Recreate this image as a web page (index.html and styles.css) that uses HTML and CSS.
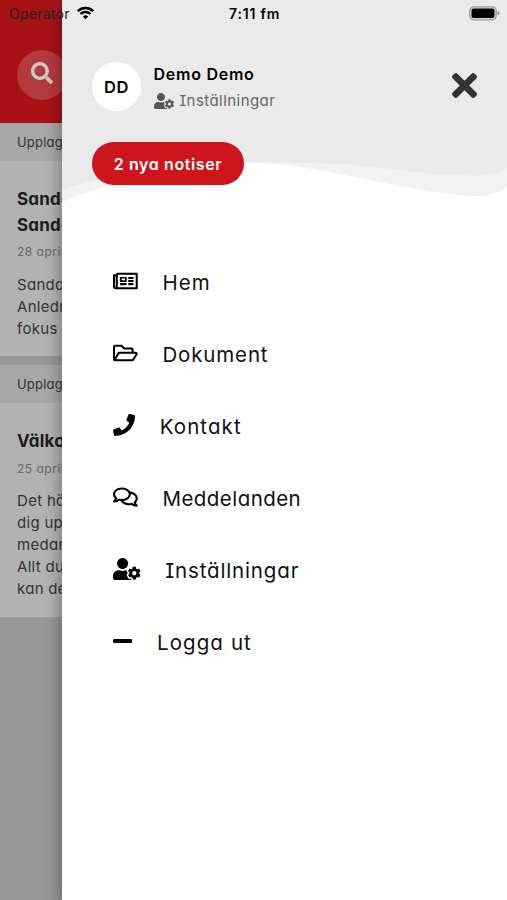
FILE: index.html
```html
<!DOCTYPE html>
<html lang="sv">
<head>
<meta charset="utf-8">
<title>Meny</title>
<link rel="stylesheet" href="styles.css">
</head>
<body>
<svg class="defs" width="0" height="0">
  <symbol id="user-cog" viewBox="0 0 640 512"><path d="M610.5 373.3c2.600-14.100 2.600-28.500 0-42.600l25.800-14.900c3-1.700 4.300-5.200 3.300-8.500-6.700-21.600-18.200-41.200-33.200-57.400-2.300-2.500-6-3.100-9-1.400l-25.800 14.900c-10.900-9.300-23.400-16.500-36.900-21.300v-29.800c0-3.400-2.400-6.400-5.700-7.100-22.300-5-45-4.800-66.200 0-3.300.7-5.700 3.700-5.700 7.100v29.800c-13.500 4.800-26 12-36.900 21.300l-25.800-14.900c-2.900-1.700-6.700-1.100-9 1.400-15 16.200-26.500 35.800-33.200 57.400-1 3.300.4 6.800 3.300 8.500l25.800 14.900c-2.600 14.100-2.600 28.500 0 42.600l-25.800 14.900c-3 1.700-4.300 5.200-3.300 8.500 6.700 21.600 18.200 41.100 33.200 57.400 2.300 2.500 6 3.100 9 1.400l25.800-14.900c10.900 9.300 23.400 16.500 36.900 21.300v29.800c0 3.400 2.400 6.400 5.700 7.100 22.300 5 45 4.800 66.200 0 3.300-.7 5.700-3.700 5.700-7.100v-29.800c13.500-4.800 26-12 36.900-21.300l25.800 14.900c2.900 1.700 6.700 1.100 9-1.400 15-16.200 26.500-35.800 33.200-57.400 1-3.300-.4-6.800-3.300-8.500l-25.800-14.900zM496 400.500c-26.800 0-48.500-21.800-48.500-48.500s21.800-48.500 48.500-48.500 48.500 21.800 48.500 48.500-21.700 48.500-48.500 48.500zM224 256c70.700 0 128-57.300 128-128S294.700 0 224 0 96 57.300 96 128s57.300 128 128 128zm201.200 226.500c-2.300-1.200-4.600-2.600-6.800-3.900l-7.900 4.600c-6 3.400-12.800 5.300-19.600 5.300-10.900 0-21.400-4.600-28.900-12.600-18.300-19.800-32.300-43.900-40.200-69.600-5.500-17.700 1.900-36.400 17.900-45.700l7.900-4.600c-.1-2.600-.1-5.200 0-7.800l-7.900-4.600c-16-9.200-23.400-28-17.900-45.700.9-2.900 2.200-5.800 3.200-8.700-3.800-.3-7.500-1.200-11.400-1.200h-16.700c-22.200 10.200-46.900 16-72.900 16s-50.600-5.800-72.900-16h-16.700C60.200 288 0 348.200 0 422.400V464c0 26.500 21.500 48 48 48h352c10.100 0 19.500-3.200 27.200-8.500-1.200-3.800-2-7.700-2-11.800v-9.200z"/></symbol>
</svg>
<div class="screen">
  <main class="feed">
    <header class="topbar">
      <span class="search"><svg viewBox="0 0 512 512"><path d="M505 442.700L405.300 343c-4.500-4.500-10.600-7-17-7H372c27.600-35.300 44-79.700 44-128C416 93.100 322.900 0 208 0S0 93.100 0 208s93.100 208 208 208c48.300 0 92.700-16.400 128-44v16.300c0 6.400 2.500 12.500 7 17l99.700 99.700c9.400 9.400 24.600 9.400 33.900 0l28.300-28.300c9.400-9.400 9.400-24.600.1-34zM208 336c-70.700 0-128-57.200-128-128 0-70.700 57.200-128 128-128 70.700 0 128 57.200 128 128 0 70.700-57.200 128-128 128z"/></svg></span>
    </header>
    <article class="post">
      <div class="strip">Upplag</div>
      <div class="content first">
        <h2>Sanda<br>Sanda</h2>
        <time>28 april</time>
        <p>Sanda<br>Anledn<br>fokus</p>
      </div>
    </article>
    <article class="post">
      <div class="strip">Upplag</div>
      <div class="content">
        <h2>Välko</h2>
        <time>25 april</time>
        <p>Det hä<br>dig up<br>medar<br>Allt du<br>kan de</p>
      </div>
    </article>
  </main>
  <aside class="drawer">
    <svg class="wave" viewBox="0 0 445 210">
      <path class="wave-light" d="M0 0H445V187C429 199 410 197 382 193C305 183 248 163 187 163C115 163 50 183 0 202Z"/>
      <path class="wave-dark" d="M0 0H445V168C430 177 420 176 390 175C340 173 312 163 240 163C130 158 55 171 0 190Z"/>
    </svg>
    <div class="profile">
      <span class="avatar">DD</span>
      <div class="who">
        <strong>Demo Demo</strong>
        <span class="settings"><svg><use href="#user-cog"/></svg><span>Inställningar</span></span>
      </div>
      <svg class="close" viewBox="0 80 352 352"><path d="M242.720 256l100.070-100.070c12.280-12.280 12.280-32.190 0-44.480l-22.240-22.240c-12.280-12.280-32.190-12.280-44.480 0L176 189.280 75.930 89.210c-12.280-12.280-32.190-12.280-44.480 0L9.210 111.450c-12.280 12.280-12.280 32.190 0 44.480L109.280 256 9.210 356.070c-12.280 12.280-12.280 32.190 0 44.480l22.240 22.240c12.280 12.280 32.200 12.280 44.480 0L176 322.720l100.070 100.070c12.280 12.280 32.200 12.280 44.480 0l22.240-22.240c12.280-12.280 12.280-32.190 0-44.480L242.720 256z"/></svg>
    </div>
    <button class="notices">2 nya notiser</button>
    <nav class="menu">
      <a><svg class="w576" viewBox="0 0 576 512"><path d="M552 64H112c-20.858 0-38.643 13.377-45.248 32H24c-13.255 0-24 10.745-24 24v272c0 30.928 25.072 56 56 56h496c13.255 0 24-10.745 24-24V88c0-13.255-10.745-24-24-24zM48 392V144h16v248c0 4.411-3.589 8-8 8s-8-3.589-8-8zm480 8H111.422c.374-2.614.578-5.283.578-8V112h416v288zM172 280h136c6.627 0 12-5.373 12-12v-96c0-6.627-5.373-12-12-12H172c-6.627 0-12 5.373-12 12v96c0 6.627 5.373 12 12 12zm28-80h80v40h-80v-40zm-40 140v-24c0-6.627 5.373-12 12-12h136c6.627 0 12 5.373 12 12v24c0 6.627-5.373 12-12 12H172c-6.627 0-12-5.373-12-12zm192 0v-24c0-6.627 5.373-12 12-12h104c6.627 0 12 5.373 12 12v24c0 6.627-5.373 12-12 12H364c-6.627 0-12-5.373-12-12zm0-144v-24c0-6.627 5.373-12 12-12h104c6.627 0 12 5.373 12 12v24c0 6.627-5.373 12-12 12H364c-6.627 0-12-5.373-12-12zm0 72v-24c0-6.627 5.373-12 12-12h104c6.627 0 12 5.373 12 12v24c0 6.627-5.373 12-12 12H364c-6.627 0-12-5.373-12-12z"/></svg><span class="wide">Hem</span></a>
      <a><svg class="w576" viewBox="0 0 576 512"><path d="M527.900 224H480v-48c0-26.500-21.500-48-48-48H272l-64-64H48C21.500 64 0 85.500 0 112v288c0 26.500 21.500 48 48 48h400c16.500 0 31.900-8.500 40.700-22.600l79.900-128c20-31.900-3-73.400-40.700-73.400zM48 118c0-3.300 2.700-6 6-6h134.100l64 64H426c3.300 0 6 2.700 6 6v42H152c-16.800 0-32.400 8.800-41.100 23.200L48 351.400zm400 282H72l77.200-128H528z"/></svg><span>Dokument</span></a>
      <a><svg class="w512" viewBox="0 0 512 512"><path d="M493.400 24.600l-104-24c-11.300-2.600-22.900 3.300-27.500 13.900l-48 112c-4.200 9.800-1.400 21.300 6.900 28l60.600 49.600c-36 76.700-98.900 140.500-177.200 177.200l-49.600-60.600c-6.800-8.300-18.200-11.100-28-6.900l-112 48C3.900 366.500-2 378.100.6 389.400l24 104C27.100 504.200 36.700 512 48 512c256.100 0 464-207.500 464-464 0-11.200-7.700-20.900-18.600-23.400z"/></svg><span class="wide">Kontakt</span></a>
      <a><svg class="w576" viewBox="0 0 576 512"><path d="M532 386.200c27.500-27.100 44-61.100 44-98.200 0-80-76.500-146.100-176.200-157.900C368.300 72.500 294.300 32 208 32 93.100 32 0 103.600 0 192c0 37 16.500 71 44 98.200-15.300 30.700-37.300 54.500-37.700 54.900-6.300 6.700-8.100 16.500-4.400 25 3.600 8.500 12 14 21.200 14 53.500 0 96.700-20.200 125.200-38.800 9.200 2.100 18.700 3.700 28.400 4.900C208.100 407.600 281.800 448 368 448c20.800 0 40.800-2.400 59.800-6.800C456.300 459.700 499.400 480 553 480c9.200 0 17.500-5.500 21.200-14 3.600-8.500 1.900-18.300-4.400-25-.4-.3-22.500-24.100-37.800-54.800zm-392.800-92.300L122.100 305c-14.100 9.100-28.500 16.300-43.100 21.400 2.700-4.700 5.400-9.700 8-14.800l15.500-31.100L77.700 256C64.200 242.600 48 220.700 48 192c0-60.700 73.300-112 160-112s160 51.300 160 112-73.300 112-160 112c-16.500 0-33-1.900-49-5.600l-19.800-4.500zM498.300 352l-24.700 24.400 15.500 31.100c2.600 5.100 5.300 10.100 8 14.800-14.600-5.100-29-12.300-43.100-21.400l-17.100-11.100-19.900 4.600c-16 3.700-32.500 5.600-49 5.600-54 0-102.200-20.100-131.300-49.700C338 339.500 416 272.900 416 192c0-3.400-.4-6.700-.7-10C479.700 196.500 528 238.800 528 288c0 28.700-16.200 50.600-29.700 64z"/></svg><span class="tight">Meddelanden</span></a>
      <a><svg class="w640"><use href="#user-cog"/></svg><span>Inställningar</span></a>
      <a><svg class="w448" viewBox="0 0 448 512"><path d="M416 208H32c-17.670 0-32 14.330-32 32v32c0 17.670 14.330 32 32 32h384c17.670 0 32-14.330 32-32v-32c0-17.670-14.330-32-32-32z"/></svg><span class="wide">Logga ut</span></a>
    </nav>
  </aside>
  <div class="status">
    <span class="carrier">Operatör</span>
    <svg class="wifi" viewBox="0 0 18 14"><path d="M1.300 5.200a11 11 0 0 1 15.400 0M4 8a7.200 7.200 0 0 1 10 0"/><path class="dot" d="M9 13.200L6.300 10.500a3.900 3.900 0 0 1 5.400 0Z"/></svg>
    <span class="clock">7:11 fm</span>
    <svg class="battery" viewBox="0 0 31 15"><rect class="case" x=".8" y=".8" width="26.400" height="13" rx="4"/><rect x="2.500" y="2.500" width="23" height="9.600" rx="2"/><path class="tip" d="M28.500 5q2 .5 2 2.300t-2 2.300z"/></svg>
  </div>
</div>
</body>
</html>
```
FILE: styles.css
```css
* { box-sizing: border-box; }
body {
  margin: 0;
  font-family: Inter, "Liberation Sans", sans-serif;
  font-feature-settings: "cv11", "cv08", "ss03";
}
.defs { display: block; }
.screen {
  position: relative;
  width: 507px;
  height: 900px;
  overflow: hidden;
  background: #979797;
}

.feed { width: 62px; overflow: hidden; white-space: nowrap; color: #333; }
.topbar { height: 123px; padding: 50px 0 0 17px; background: #a81217; }
.search {
  display: flex;
  align-items: center;
  justify-content: center;
  width: 50px;
  height: 50px;
  border-radius: 50%;
  background: #b53a3e;
}
.search svg { width: 22px; height: 22px; margin-bottom: 4px; fill: #c9c9c9; }
.post { margin-bottom: 9px; background: #b2b2b2; }
.strip {
  height: 38px;
  padding-left: 17px;
  background: #a7a7a7;
  font-size: 13px;
  line-height: 38px;
  letter-spacing: .2px;
}
.content { height: 214px; padding: 25px 0 0 17px; }
.content.first { height: 195px; }
.content h2 {
  margin: 0;
  color: #1c1c1c;
  font-size: 17px;
  line-height: 26px;
  font-weight: 700;
  letter-spacing: .2px;
}
.content time {
  display: block;
  padding-top: 4px;
  color: #666;
  font-size: 12px;
  line-height: 22px;
  letter-spacing: .5px;
}
.content p {
  margin: 10px 0 0;
  font-size: 15px;
  line-height: 22px;
  letter-spacing: .3px;
}
.content.first p { margin-top: 11px; }
.content.first time { padding-top: 3px; }

.drawer {
  position: absolute;
  top: 0;
  right: 0;
  width: 445px;
  height: 900px;
  background: #fff;
  box-shadow: 0 8px 16px rgba(0, 0, 0, .4);
}
.wave { position: absolute; top: 0; left: 0; width: 445px; height: 210px; }
.wave-light { fill: #f2f2f2; }
.wave-dark { fill: #eaeaea; }
.profile {
  position: relative;
  display: flex;
  align-items: center;
  height: 111px;
  padding: 62px 30px 0 30px;
}
.avatar {
  display: flex;
  align-items: center;
  justify-content: center;
  width: 49px;
  height: 49px;
  border-radius: 50%;
  background: #fff;
  font-size: 16.5px;
  font-weight: 600;
  letter-spacing: .5px;
}
.who { display: flex; flex-direction: column; gap: 5px; flex: 1; padding: 1px 0 0 12.5px; }
.who strong { font-size: 16px; line-height: 22px; font-weight: 600; letter-spacing: .75px; }
.settings {
  display: flex;
  align-items: center;
  gap: 6px;
  color: #666;
  font-size: 15px;
  line-height: 22px;
  letter-spacing: .45px;
}
.settings svg { width: 20px; height: 16px; fill: #555; }
.close { width: 25px; height: 25px; margin-bottom: 2px; fill: #333; }
.notices {
  position: relative;
  display: block;
  width: 152px;
  height: 43px;
  margin: 31px 0 0 30px;
  padding: 0;
  border: 0;
  border-radius: 22px;
  background: #cf151c;
  color: #fff;
  font: inherit;
  font-size: 16px;
  font-weight: 600;
  letter-spacing: .6px;
}
.menu { padding: 61px 0 0 51px; }
.menu a {
  display: flex;
  align-items: center;
  gap: 24.7px;
  height: 72px;
  color: #111;
  font-size: 20.5px;
  letter-spacing: .85px;
}
.menu .wide { letter-spacing: 1.1px; }
.menu .tight { letter-spacing: .45px; }
.menu svg { height: 22px; margin-bottom: 2px; fill: #000; }
.w448 { width: 19.25px; }
.w512 { width: 22px; }
.w576 { width: 24.75px; }
.w640 { width: 27.5px; }

.status {
  position: absolute;
  inset: 0 0 auto;
  display: flex;
  align-items: center;
  height: 27px;
  padding: 0 7px 0 9px;
  font-family: Inter, sans-serif;
  font-feature-settings: normal;
  font-size: 14px;
}
.carrier { width: 67px; color: #222; letter-spacing: .25px; }
.wifi { width: 19px; height: 14px; margin-bottom: 2px; fill: none; stroke: #000; stroke-width: 2.400; }
.wifi .dot { fill: #000; stroke: none; }
.clock { flex: 1; padding-left: 134px; font-weight: 600; letter-spacing: .8px; }
.battery { width: 31px; height: 15px; }
.battery .case { fill: #ddd; stroke: #999; stroke-width: 1.300; }
.battery .tip { fill: #999; }
```
